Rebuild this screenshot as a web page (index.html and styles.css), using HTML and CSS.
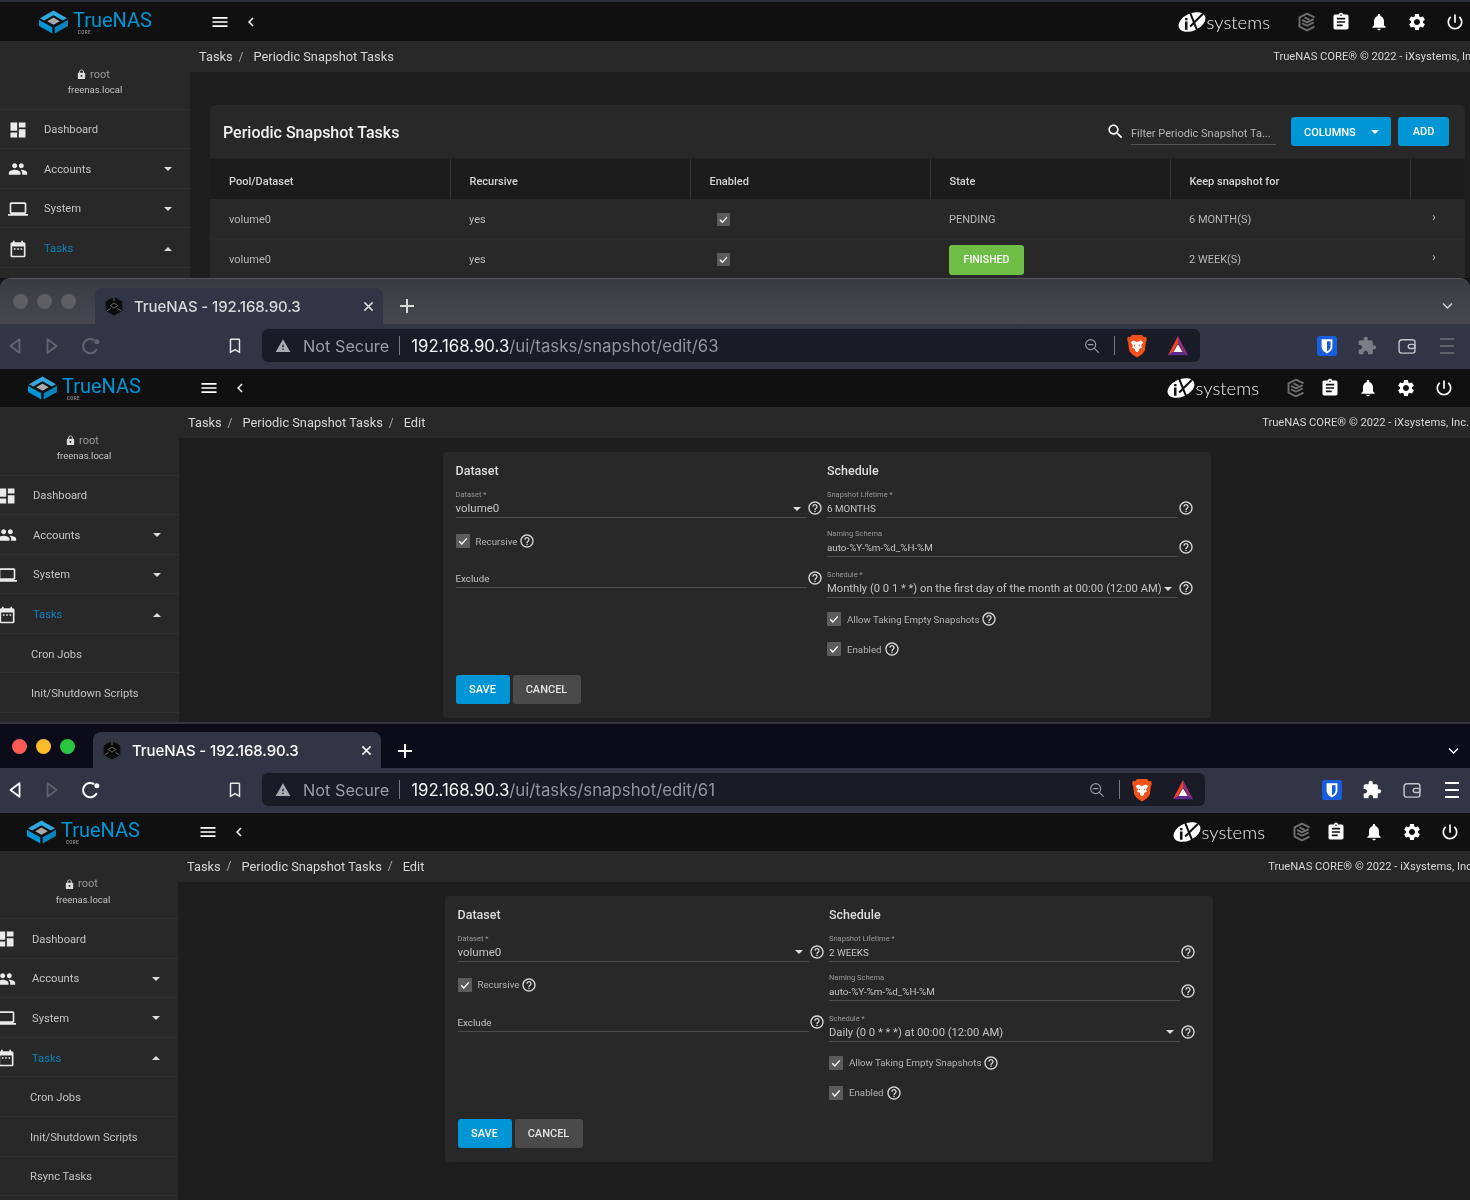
FILE: index.html
```html
<!DOCTYPE html>
<html lang="en">
<head>
<meta charset="utf-8">
<title>TrueNAS - 192.168.90.3</title>
<link rel="stylesheet" href="styles.css">
</head>
<body>
<svg class="defs" xmlns="http://www.w3.org/2000/svg">
  <symbol id="i-menu" viewBox="0 0 24 24"><path d="M3 6h18v2H3zM3 11h18v2H3zM3 16h18v2H3z"/></symbol>
  <symbol id="i-chev" viewBox="0 0 24 24"><path d="M15.41 16.58 10.83 12l4.58-4.59L14 6l-6 6 6 6z"/></symbol>
  <symbol id="i-dash" viewBox="0 0 24 24"><path d="M3 13h8V3H3v10zm0 8h8v-6H3v6zm10 0h8V11h-8v10zm0-18v6h8V3h-8z"/></symbol>
  <symbol id="i-people" viewBox="0 0 24 24"><path d="M16 11c1.66 0 2.99-1.34 2.99-3S17.66 5 16 5c-1.66 0-3 1.34-3 3s1.34 3 3 3zm-8 0c1.66 0 2.99-1.34 2.99-3S9.66 5 8 5C6.34 5 5 6.34 5 8s1.34 3 3 3zm0 2c-2.33 0-7 1.17-7 3.5V19h14v-2.5c0-2.33-4.67-3.5-7-3.5zm8 0c-.29 0-.62.02-.97.05 1.16.84 1.97 1.97 1.97 3.45V19h6v-2.5c0-2.33-4.67-3.5-7-3.5z"/></symbol>
  <symbol id="i-laptop" viewBox="0 0 24 24"><path d="M20 18c1.1 0 1.99-.9 1.99-2L22 6c0-1.1-.9-2-2-2H4c-1.1 0-2 .9-2 2v10c0 1.1.9 2 2 2H0v2h24v-2h-4zM4 6h16v10H4V6z"/></symbol>
  <symbol id="i-cal" viewBox="0 0 24 24"><path d="M19 4h-1V2h-2v2H8V2H6v2H5c-1.1 0-2 .9-2 2v14c0 1.1.9 2 2 2h14c1.1 0 2-.9 2-2V6c0-1.1-.9-2-2-2zm0 16H5V9h14v11zM7 11h2v2H7zm4 0h2v2h-2zm4 0h2v2h-2z"/></symbol>
  <symbol id="i-clip" viewBox="0 0 24 24"><path d="M19 3h-4.18C14.4 1.84 13.3 1 12 1c-1.3 0-2.4.84-2.82 2H5c-1.1 0-2 .9-2 2v14c0 1.1.9 2 2 2h14c1.1 0 2-.9 2-2V5c0-1.1-.9-2-2-2zm-7 0c.55 0 1 .45 1 1s-.45 1-1 1-1-.45-1-1 .45-1 1-1zm2 14H7v-2h7v2zm3-4H7v-2h10v2zm0-4H7V7h10v2z"/></symbol>
  <symbol id="i-bell" viewBox="0 0 24 24"><path d="M12 22c1.1 0 2-.9 2-2h-4c0 1.1.89 2 2 2zm6-6v-5c0-3.07-1.64-5.64-4.5-6.32V4c0-.83-.67-1.5-1.5-1.5s-1.5.67-1.5 1.5v.68C7.63 5.36 6 7.92 6 11v5l-2 2v1h16v-1l-2-2z"/></symbol>
  <symbol id="i-gear" viewBox="0 0 24 24"><path d="M19.14 12.94c.04-.3.06-.61.06-.94 0-.32-.02-.64-.07-.94l2.03-1.58c.18-.14.23-.41.12-.61l-1.92-3.32c-.12-.22-.37-.29-.59-.22l-2.39.96c-.5-.38-1.03-.7-1.62-.94l-.36-2.54c-.04-.24-.24-.41-.48-.41h-3.84c-.24 0-.43.17-.47.41l-.36 2.54c-.59.24-1.13.57-1.62.94l-2.39-.96c-.22-.08-.47 0-.59.22L2.74 8.87c-.12.21-.08.47.12.61l2.03 1.58c-.05.3-.09.63-.09.94s.02.64.07.94l-2.03 1.58c-.18.14-.23.41-.12.61l1.92 3.32c.12.22.37.29.59.22l2.39-.96c.5.38 1.03.7 1.62.94l.36 2.54c.05.24.24.41.48.41h3.84c.24 0 .44-.17.47-.41l.36-2.54c.59-.24 1.13-.56 1.62-.94l2.39.96c.22.08.47 0 .59-.22l1.92-3.32c.12-.22.07-.47-.12-.61l-2.01-1.58zM12 15.6c-1.98 0-3.6-1.62-3.6-3.6s1.62-3.6 3.6-3.6 3.6 1.62 3.6 3.6-1.62 3.6-3.6 3.6z"/></symbol>
  <symbol id="i-power" viewBox="0 0 24 24"><path d="M13 3h-2v10h2V3zm4.83 2.17-1.42 1.42C17.99 7.86 19 9.81 19 12c0 3.87-3.13 7-7 7s-7-3.13-7-7c0-2.19 1.01-4.14 2.58-5.42L6.17 5.17C4.23 6.82 3 9.26 3 12c0 4.97 4.03 9 9 9s9-4.03 9-9c0-2.74-1.23-5.18-3.17-6.83z"/></symbol>
  <symbol id="i-search" viewBox="0 0 24 24"><path d="M15.5 14h-.79l-.28-.27C15.41 12.59 16 11.11 16 9.5 16 5.91 13.09 3 9.5 3S3 5.91 3 9.5 5.91 16 9.5 16c1.61 0 3.09-.59 4.23-1.57l.27.28v.79l5 4.99L20.49 19l-4.99-5zm-6 0C7.01 14 5 11.99 5 9.5S7.01 5 9.5 5 14 7.01 14 9.5 11.99 14 9.5 14z"/></symbol>
  <symbol id="i-lock" viewBox="0 0 24 24"><path d="M18 8h-1V6c0-2.76-2.24-5-5-5S7 3.24 7 6v2H6c-1.1 0-2 .9-2 2v10c0 1.1.9 2 2 2h12c1.1 0 2-.9 2-2V10c0-1.1-.9-2-2-2zm-6 9c-1.1 0-2-.9-2-2s.9-2 2-2 2 .9 2 2-.9 2-2 2zm3.1-9H8.9V6c0-1.71 1.39-3.1 3.1-3.1 1.71 0 3.1 1.39 3.1 3.1v2z"/></symbol>
  <symbol id="i-help" viewBox="0 0 24 24"><path d="M11 18h2v-2h-2v2zm1-16C6.48 2 2 6.48 2 12s4.48 10 10 10 10-4.48 10-10S17.52 2 12 2zm0 18c-4.41 0-8-3.59-8-8s3.59-8 8-8 8 3.59 8 8-3.59 8-8 8zm0-14c-2.21 0-4 1.79-4 4h2c0-1.1.9-2 2-2s2 .9 2 2c0 2-3 1.75-3 5h2c0-2.25 3-2.5 3-5 0-2.21-1.79-4-4-4z"/></symbol>
  <symbol id="i-check" viewBox="0 0 14 14"><path d="M3.2 7.3 5.8 10l5-5.6" fill="none" stroke="currentColor" stroke-width="1.3"/></symbol>
  <symbol id="i-ext" viewBox="0 0 24 24"><path d="M20.5 11H19V7c0-1.1-.9-2-2-2h-4V3.5C13 2.12 11.88 1 10.5 1S8 2.12 8 3.5V5H4c-1.1 0-1.99.9-1.99 2v3.8H3.5c1.49 0 2.7 1.21 2.7 2.7s-1.21 2.7-2.7 2.7H2V20c0 1.1.9 2 2 2h3.8v-1.5c0-1.49 1.21-2.7 2.7-2.7 1.49 0 2.7 1.21 2.7 2.7V22H17c1.1 0 2-.9 2-2v-4h1.5c1.38 0 2.5-1.12 2.5-2.5S21.88 11 20.5 11z"/></symbol>
  <symbol id="i-bookmark" viewBox="0 0 24 24"><path d="M17 2H7c-1.1 0-2 .9-2 2v18l7-4 7 4V4c0-1.1-.9-2-2-2zm0 16.6-5-2.8-5 2.8V4h10v14.6z"/></symbol>
  <symbol id="i-warn" viewBox="0 0 24 24"><path d="M1 21h22L12 2 1 21zm12-3h-2v-2h2v2zm0-4h-2v-4h2v4z"/></symbol>
  <symbol id="i-back" viewBox="0 0 24 24"><path d="M18 3 6 12l12 9z" fill="none" stroke="currentColor" stroke-width="2.4" stroke-linejoin="round"/></symbol>
  <symbol id="i-fwd" viewBox="0 0 24 24"><path d="m6 3 12 9-12 9z" fill="none" stroke="currentColor" stroke-width="2.4" stroke-linejoin="round"/></symbol>
  <symbol id="i-reload" viewBox="0 0 24 24"><path d="M18.5 16.5A8.6 8.6 0 1 1 15 4.5" fill="none" stroke="currentColor" stroke-width="2.4" stroke-linecap="round"/><circle cx="19" cy="7" r="3"/></symbol>
  <symbol id="i-zoom" viewBox="0 0 24 24"><g fill="none" stroke="currentColor" stroke-width="1.7" stroke-linecap="round"><circle cx="10" cy="10" r="7.5"/><path d="M6.5 10h7M15.5 15.5l6 6"/></g></symbol>
  <symbol id="i-close" viewBox="0 0 12 12"><path d="m1.5 1.5 9 9M10.5 1.5l-9 9" fill="none" stroke="currentColor" stroke-width="1.7"/></symbol>
  <symbol id="i-plus" viewBox="0 0 16 16"><path d="M8 1v14M1 8h14" fill="none" stroke="currentColor" stroke-width="2"/></symbol>
  <symbol id="i-down" viewBox="0 0 16 16"><path d="m2.5 5.5 5.5 5.5 5.5-5.5" fill="none" stroke="currentColor" stroke-width="1.7"/></symbol>
  <symbol id="i-bars" viewBox="0 0 20 20"><path d="M3 3h14M3 10h14M3 17h14" fill="none" stroke="currentColor" stroke-width="1.8"/></symbol>
  <symbol id="i-wallet" viewBox="0 0 24 24"><g fill="none" stroke="currentColor" stroke-width="1.7"><path d="M2.5 8c0-2 1-3.500 3.500-3.500h12.500c2 0 3 1 3 2.500v11c0 1.500-1 2.500-3 2.500H5.500c-2 0-3-1-3-3z"/><rect x="13.500" y="10" width="8" height="5" rx="2.500"/></g></symbol>
  <symbol id="i-cube" viewBox="0 0 24 24"><g fill="none" stroke="currentColor" stroke-width="2.300" stroke-linejoin="round"><path d="M21 6.500 12 2 3 6.500v11L12 22l9-4.500"/><path d="m6 9.500 6 3 8-4M6 13.500l6 3 8-4M9 6.500l6 3"/></g></symbol>
  <symbol id="i-fav" viewBox="0 0 24 24"><path d="M12 1 2 6.500V18l10 5.500L22 18V6.500z"/><path d="m12 8.500 4.500 3-4.500 3-4.500-3zM12 1v5M3 18l5-3M21 18l-5-3" fill="none" stroke="#777" stroke-width="1"/></symbol>
  <symbol id="i-logo" viewBox="0 0 30 24"><path fill="#31a9e0" d="m15 .5 13.500 7.700-4.200 2.400L15 5.200 5.700 10.600 1.500 8.200z"/><path fill="#0095d5" d="m.5 9.700 4.300 2.500 9 5V23.500L.5 16z"/><path fill="#0a84bd" d="m29.500 9.700-4.300 2.500-9 5V23.500L29.500 16z"/><path fill="#a9a9a9" d="m15 7.600 6.300 3.600-6.300 3.600-6.300-3.600z"/></symbol>
  <symbol id="i-ix" viewBox="0 0 30 24"><ellipse cx="15" cy="12" rx="15.500" ry="9.500" transform="rotate(-24 15 12)" fill="#fff"/><path fill="none" stroke="#111" stroke-width="2.200" d="m13 2 8 20M27 3 13 17"/><path fill="#111" d="M7.500 7.500h2.600v2.500H7.500zM7.300 11.500h2.800v9H7.300z"/></symbol>
  <symbol id="i-brave" viewBox="0 0 24 24"><path fill="#f1511b" d="M7 1h10l2 2.200 2.200-.4.600 3.200-.9 2.500-1.200 8.500-3 3.500L12 23.500 7.300 20.500l-3-3.500L3.100 8.500 2.200 6l.6-3.200 2.200.4z"/><path fill="#fff" d="M12 8 8 6.600 5.800 8.200 8 11.500l-1 2 3 1.500v1.700l2 1.500 2-1.500V15l3-1.500-1-2 2.200-3.300L16 6.600z"/><path fill="#f1511b" d="m8.500 10.500 2 .5-1 1.500zM15.500 10.500l-2 .5 1 1.500z"/></symbol>
  <symbol id="i-bat" viewBox="0 0 24 24"><path fill="#f0402c" d="M12 1 1 22l5.500-3.200L12 9z"/><path fill="#8c2f78" d="m12 1 11 21-5.500-3.200L12 9z"/><path fill="#5a2b8c" d="M1 22h22l-5.500-3.500h-11z"/><path fill="#fff" d="m12 10 5 8.500H7z"/></symbol>
  <symbol id="i-bw" viewBox="0 0 24 24"><rect width="24" height="24" rx="3" fill="#175ddc"/><path fill="#fff" d="M5.500 4h13v9c0 4.300-3.700 6.400-6.500 8-2.800-1.600-6.500-3.700-6.500-8z"/><path fill="#175ddc" d="M12 6.200h4.300V13c0 2.700-2.300 4.300-4.300 5.500z"/></symbol>
</svg>

<main class="stack">

  <!-- Window 1: list page, only the page visible -->
  <section class="win win-list">
    <div class="app">
      <header class="topbar">
        <div class="brand"><svg class="brand-mark"><use href="#i-logo"/></svg><div class="brand-text"><span class="brand-name">TrueNAS</span><span class="brand-sub">CORE</span></div></div>
        <svg class="ico bar-menu"><use href="#i-menu"/></svg>
        <svg class="ico bar-chev"><use href="#i-chev"/></svg>
        <div class="bar-right">
          <div class="ix"><svg class="ix-mark"><use href="#i-ix"/></svg><span class="ix-name">systems</span></div>
          <span class="bar-cell bar-cube"><svg class="ico"><use href="#i-cube"/></svg></span>
          <span class="bar-cell"><svg class="ico"><use href="#i-clip"/></svg></span>
          <span class="bar-cell"><svg class="ico"><use href="#i-bell"/></svg></span>
          <span class="bar-cell"><svg class="ico"><use href="#i-gear"/></svg></span>
          <span class="bar-cell"><svg class="ico"><use href="#i-power"/></svg></span>
        </div>
      </header>
      <div class="body">
        <aside class="side">
          <div class="user"><div class="user-name"><svg class="ico lock"><use href="#i-lock"/></svg>root</div><div class="user-host">freenas.local</div></div>
          <div class="nav"><svg class="ico nav-ico"><use href="#i-dash"/></svg>Dashboard</div>
          <div class="nav"><svg class="ico nav-ico"><use href="#i-people"/></svg>Accounts<i class="caret"></i></div>
          <div class="nav"><svg class="ico nav-ico"><use href="#i-laptop"/></svg>System<i class="caret"></i></div>
          <div class="nav nav-on"><svg class="ico nav-ico"><use href="#i-cal"/></svg>Tasks<i class="caret caret-up"></i></div>
        </aside>
        <div class="main">
          <div class="crumbs"><span>Tasks</span><b>/</b><span>Periodic Snapshot Tasks</span><em>TrueNAS CORE® © 2022 - iXsystems, Inc.</em></div>
          <div class="list-wrap">
            <div class="list-card">
              <div class="list-head">
                <h1>Periodic Snapshot Tasks</h1>
                <svg class="ico filter-ico"><use href="#i-search"/></svg>
                <div class="filter">Filter Periodic Snapshot Ta...</div>
                <div class="btn btn-blue btn-cols">COLUMNS<i class="caret"></i></div>
                <div class="btn btn-blue btn-add">ADD</div>
              </div>
              <table class="tbl">
                <thead><tr><th>Pool/Dataset</th><th>Recursive</th><th>Enabled</th><th>State</th><th>Keep snapshot for</th><th></th></tr></thead>
                <tbody>
                  <tr><td>volume0</td><td>yes</td><td><span class="cb cb-tbl"><svg><use href="#i-check"/></svg></span></td><td>PENDING</td><td>6 MONTH(S)</td><td class="more">›</td></tr>
                  <tr><td>volume0</td><td>yes</td><td><span class="cb cb-tbl"><svg><use href="#i-check"/></svg></span></td><td><span class="badge">FINISHED</span></td><td>2 WEEK(S)</td><td class="more">›</td></tr>
                </tbody>
              </table>
            </div>
          </div>
        </div>
      </div>
    </div>
  </section>

  <!-- Window 2: inactive browser window -->
  <section class="win win-mid">
    <div class="strip">
      <span class="light"></span><span class="light"></span><span class="light"></span>
      <div class="tab"><svg class="fav"><use href="#i-fav"/></svg><span class="tab-title">TrueNAS - 192.168.90.3</span><svg class="tab-x"><use href="#i-close"/></svg></div>
      <svg class="tab-plus"><use href="#i-plus"/></svg>
      <svg class="tab-down"><use href="#i-down"/></svg>
    </div>
    <div class="toolbar">
      <svg class="tb tb-back"><use href="#i-back"/></svg>
      <svg class="tb tb-fwd"><use href="#i-fwd"/></svg>
      <svg class="tb tb-reload"><use href="#i-reload"/></svg>
      <svg class="tb tb-mark"><use href="#i-bookmark"/></svg>
      <div class="addr">
        <svg class="addr-warn"><use href="#i-warn"/></svg><span class="addr-ns">Not Secure</span><i class="addr-sep"></i><span class="addr-url"><span class="host">192.168.90.3</span>/ui/tasks/snapshot/edit/63</span>
        <svg class="addr-zoom"><use href="#i-zoom"/></svg><i class="addr-sep addr-sep2"></i>
        <svg class="addr-brave"><use href="#i-brave"/></svg><svg class="addr-bat"><use href="#i-bat"/></svg>
      </div>
      <span class="ext ext-first"><svg><use href="#i-bw"/></svg></span>
      <span class="ext ext-mute"><svg><use href="#i-ext"/></svg></span>
      <span class="ext ext-wallet"><svg><use href="#i-wallet"/></svg></span>
      <span class="ext ext-mute ext-dim"><svg><use href="#i-bars"/></svg></span>
    </div>
    <div class="app">
      <header class="topbar">
        <div class="brand"><svg class="brand-mark"><use href="#i-logo"/></svg><div class="brand-text"><span class="brand-name">TrueNAS</span><span class="brand-sub">CORE</span></div></div>
        <svg class="ico bar-menu"><use href="#i-menu"/></svg>
        <svg class="ico bar-chev"><use href="#i-chev"/></svg>
        <div class="bar-right">
          <div class="ix"><svg class="ix-mark"><use href="#i-ix"/></svg><span class="ix-name">systems</span></div>
          <span class="bar-cell bar-cube"><svg class="ico"><use href="#i-cube"/></svg></span>
          <span class="bar-cell"><svg class="ico"><use href="#i-clip"/></svg></span>
          <span class="bar-cell"><svg class="ico"><use href="#i-bell"/></svg></span>
          <span class="bar-cell"><svg class="ico"><use href="#i-gear"/></svg></span>
          <span class="bar-cell"><svg class="ico"><use href="#i-power"/></svg></span>
        </div>
      </header>
      <div class="body">
        <aside class="side">
          <div class="user"><div class="user-name"><svg class="ico lock"><use href="#i-lock"/></svg>root</div><div class="user-host">freenas.local</div></div>
          <div class="nav"><svg class="ico nav-ico"><use href="#i-dash"/></svg>Dashboard</div>
          <div class="nav"><svg class="ico nav-ico"><use href="#i-people"/></svg>Accounts<i class="caret"></i></div>
          <div class="nav"><svg class="ico nav-ico"><use href="#i-laptop"/></svg>System<i class="caret"></i></div>
          <div class="nav nav-on"><svg class="ico nav-ico"><use href="#i-cal"/></svg>Tasks<i class="caret caret-up"></i></div>
          <div class="nav nav-sub">Cron Jobs</div>
          <div class="nav nav-sub">Init/Shutdown Scripts</div>
        </aside>
        <div class="main">
          <div class="crumbs"><span>Tasks</span><b>/</b><span>Periodic Snapshot Tasks</span><b>/</b><span>Edit</span><em>TrueNAS CORE® © 2022 - iXsystems, Inc.</em></div>
          <div class="form-wrap">
            <form class="form-card">
              <div class="form-cols">
                <div class="col">
                  <h2>Dataset</h2>
                  <div class="field">
                    <div class="fbody"><label>Dataset *</label><div class="val val-lg">volume0<i class="caret"></i></div></div>
                    <svg class="ico help"><use href="#i-help"/></svg>
                  </div>
                  <div class="chk chk-rec"><span class="cb"><svg><use href="#i-check"/></svg></span>Recursive<svg class="ico help"><use href="#i-help"/></svg></div>
                  <div class="field field-exc">
                    <div class="fbody"><div class="val">Exclude</div></div>
                    <svg class="ico help"><use href="#i-help"/></svg>
                  </div>
                </div>
                <div class="col">
                  <h2>Schedule</h2>
                  <div class="field">
                    <div class="fbody"><label>Snapshot Lifetime *</label><div class="val">6 MONTHS</div></div>
                    <svg class="ico help"><use href="#i-help"/></svg>
                  </div>
                  <div class="field field-name">
                    <div class="fbody"><label>Naming Schema</label><div class="val">auto-%Y-%m-%d_%H-%M</div></div>
                    <svg class="ico help"><use href="#i-help"/></svg>
                  </div>
                  <div class="field field-sched">
                    <div class="fbody"><label>Schedule *</label><div class="val val-lg val-sched">Monthly (0 0 1 * *) on the first day of the month at 00:00 (12:00 AM)<i class="caret"></i></div></div>
                    <svg class="ico help"><use href="#i-help"/></svg>
                  </div>
                  <div class="chk chk-allow"><span class="cb"><svg><use href="#i-check"/></svg></span>Allow Taking Empty Snapshots<svg class="ico help"><use href="#i-help"/></svg></div>
                  <div class="chk chk-en"><span class="cb"><svg><use href="#i-check"/></svg></span>Enabled<svg class="ico help"><use href="#i-help"/></svg></div>
                </div>
              </div>
              <div class="actions"><div class="btn btn-blue btn-save">SAVE</div><div class="btn btn-grey btn-cancel">CANCEL</div></div>
            </form>
          </div>
        </div>
      </div>
    </div>
  </section>

  <!-- Window 3: active browser window -->
  <section class="win win-low">
    <div class="strip">
      <span class="light light-r"></span><span class="light light-y"></span><span class="light light-g"></span>
      <div class="tab"><svg class="fav"><use href="#i-fav"/></svg><span class="tab-title">TrueNAS - 192.168.90.3</span><svg class="tab-x"><use href="#i-close"/></svg></div>
      <svg class="tab-plus"><use href="#i-plus"/></svg>
      <svg class="tab-down"><use href="#i-down"/></svg>
    </div>
    <div class="toolbar">
      <svg class="tb tb-back"><use href="#i-back"/></svg>
      <svg class="tb tb-fwd"><use href="#i-fwd"/></svg>
      <svg class="tb tb-reload"><use href="#i-reload"/></svg>
      <svg class="tb tb-mark"><use href="#i-bookmark"/></svg>
      <div class="addr">
        <svg class="addr-warn"><use href="#i-warn"/></svg><span class="addr-ns">Not Secure</span><i class="addr-sep"></i><span class="addr-url"><span class="host">192.168.90.3</span>/ui/tasks/snapshot/edit/61</span>
        <svg class="addr-zoom"><use href="#i-zoom"/></svg><i class="addr-sep addr-sep2"></i>
        <svg class="addr-brave"><use href="#i-brave"/></svg><svg class="addr-bat"><use href="#i-bat"/></svg>
      </div>
      <span class="ext ext-first"><svg><use href="#i-bw"/></svg></span>
      <span class="ext"><svg><use href="#i-ext"/></svg></span>
      <span class="ext ext-wallet"><svg><use href="#i-wallet"/></svg></span>
      <span class="ext"><svg><use href="#i-bars"/></svg></span>
    </div>
    <div class="app">
      <header class="topbar">
        <div class="brand"><svg class="brand-mark"><use href="#i-logo"/></svg><div class="brand-text"><span class="brand-name">TrueNAS</span><span class="brand-sub">CORE</span></div></div>
        <svg class="ico bar-menu"><use href="#i-menu"/></svg>
        <svg class="ico bar-chev"><use href="#i-chev"/></svg>
        <div class="bar-right">
          <div class="ix"><svg class="ix-mark"><use href="#i-ix"/></svg><span class="ix-name">systems</span></div>
          <span class="bar-cell bar-cube"><svg class="ico"><use href="#i-cube"/></svg></span>
          <span class="bar-cell"><svg class="ico"><use href="#i-clip"/></svg></span>
          <span class="bar-cell"><svg class="ico"><use href="#i-bell"/></svg></span>
          <span class="bar-cell"><svg class="ico"><use href="#i-gear"/></svg></span>
          <span class="bar-cell"><svg class="ico"><use href="#i-power"/></svg></span>
        </div>
      </header>
      <div class="body">
        <aside class="side">
          <div class="user"><div class="user-name"><svg class="ico lock"><use href="#i-lock"/></svg>root</div><div class="user-host">freenas.local</div></div>
          <div class="nav"><svg class="ico nav-ico"><use href="#i-dash"/></svg>Dashboard</div>
          <div class="nav"><svg class="ico nav-ico"><use href="#i-people"/></svg>Accounts<i class="caret"></i></div>
          <div class="nav"><svg class="ico nav-ico"><use href="#i-laptop"/></svg>System<i class="caret"></i></div>
          <div class="nav nav-on"><svg class="ico nav-ico"><use href="#i-cal"/></svg>Tasks<i class="caret caret-up"></i></div>
          <div class="nav nav-sub">Cron Jobs</div>
          <div class="nav nav-sub">Init/Shutdown Scripts</div>
          <div class="nav nav-sub">Rsync Tasks</div>
        </aside>
        <div class="main">
          <div class="crumbs"><span>Tasks</span><b>/</b><span>Periodic Snapshot Tasks</span><b>/</b><span>Edit</span><em>TrueNAS CORE® © 2022 - iXsystems, Inc.</em></div>
          <div class="form-wrap">
            <form class="form-card">
              <div class="form-cols">
                <div class="col">
                  <h2>Dataset</h2>
                  <div class="field">
                    <div class="fbody"><label>Dataset *</label><div class="val val-lg">volume0<i class="caret"></i></div></div>
                    <svg class="ico help"><use href="#i-help"/></svg>
                  </div>
                  <div class="chk chk-rec"><span class="cb"><svg><use href="#i-check"/></svg></span>Recursive<svg class="ico help"><use href="#i-help"/></svg></div>
                  <div class="field field-exc">
                    <div class="fbody"><div class="val">Exclude</div></div>
                    <svg class="ico help"><use href="#i-help"/></svg>
                  </div>
                </div>
                <div class="col">
                  <h2>Schedule</h2>
                  <div class="field">
                    <div class="fbody"><label>Snapshot Lifetime *</label><div class="val">2 WEEKS</div></div>
                    <svg class="ico help"><use href="#i-help"/></svg>
                  </div>
                  <div class="field field-name">
                    <div class="fbody"><label>Naming Schema</label><div class="val">auto-%Y-%m-%d_%H-%M</div></div>
                    <svg class="ico help"><use href="#i-help"/></svg>
                  </div>
                  <div class="field field-sched">
                    <div class="fbody"><label>Schedule *</label><div class="val val-lg val-sched">Daily (0 0 * * *) at 00:00 (12:00 AM)<i class="caret"></i></div></div>
                    <svg class="ico help"><use href="#i-help"/></svg>
                  </div>
                  <div class="chk chk-allow"><span class="cb"><svg><use href="#i-check"/></svg></span>Allow Taking Empty Snapshots<svg class="ico help"><use href="#i-help"/></svg></div>
                  <div class="chk chk-en"><span class="cb"><svg><use href="#i-check"/></svg></span>Enabled<svg class="ico help"><use href="#i-help"/></svg></div>
                </div>
              </div>
              <div class="actions"><div class="btn btn-blue btn-save">SAVE</div><div class="btn btn-grey btn-cancel">CANCEL</div></div>
            </form>
          </div>
        </div>
      </div>
    </div>
  </section>

</main>
</body>
</html>
```

FILE: styles.css
```css
* { box-sizing: border-box; }
html, body { margin: 0; padding: 0; background: #141414; }
body { font-family: Roboto, "Liberation Sans", sans-serif; color: #ccc; }
.defs { display: none; }
.ico { fill: currentColor; display: block; flex: none; }
svg { fill: currentColor; }

.stack { width: 1470px; height: 1200px; overflow: hidden; display: flex; flex-direction: column; filter: blur(.35px); }
.win { overflow: hidden; display: flex; flex-direction: column; flex: none; --shift: -11px; --app-w: 1490px; --addr-w: 938px; --form-pad: 4px; }
.win-list { height: 278px; --shift: 0px; border-top: 2px solid #2c2e3e; }
.win-mid { height: 444px; background: #3c3d43; border-top: 1px solid #55565c; border-radius: 10px 10px 0 0; }
.win-low { height: 478px; --shift: -12px; --app-w: 1497px; --addr-w: 943px; --form-pad: 5px; border-top: 2px solid #34343a; }

/* Browser chrome */
.strip { height: 45px; display: flex; align-items: flex-start; flex: none; padding-left: 13px; color: #d8d8d8; }
.win-mid .strip { background: linear-gradient(#3b3c42, #47474f); }
.win-low .strip { height: 44px; padding-left: 12px; background: #0b0b1a; color: #fff; }
.light { width: 15px; height: 15px; border-radius: 50%; background: #5e5e63; margin: 15px 9px 0 0; flex: none; }
.light-r { background: #fb5a55; }
.light-y { background: #fdbc2e; }
.light-g { background: #2ac840; }
.tab { width: 288px; height: 36px; margin: 9px 0 0 10px; background: #323545; border-radius: 8px 8px 0 0; display: flex; align-items: center; padding: 0 9px; flex: none; }
.win-low .tab { height: 36px; margin: 8px 0 0 9px; }
.fav { width: 20px; height: 22px; color: #0c0c0c; flex: none; }
.tab-title { flex: 1; margin-left: 10px; font: 500 15px Inter, "Liberation Sans", sans-serif; letter-spacing: -.1px; }
.tab-x { width: 11px; height: 11px; flex: none; }
.tab-plus { width: 16px; height: 16px; margin: 19px 0 0 16px; flex: none; }
.tab-down { width: 13px; height: 13px; margin: 20px 16px 0 auto; flex: none; }
.win-low .tab-down { margin-right: 10px; }

.toolbar { height: 45px; background: #323545; display: flex; align-items: center; flex: none; padding-bottom: 2px; }
.win-low .toolbar { height: 44.5px; padding-bottom: 1px; }
.tb { width: 18px; height: 20px; color: #636672; flex: none; }
.tb-back { margin-left: 6px; }
.tb-fwd { margin-left: 19px; }
.tb-reload { width: 20px; margin-left: 20px; }
.tb-mark { margin-left: 125px; color: #e6e6e6; }
.win-low .tb-back, .win-low .tb-reload { color: #fff; }
.win-low .tb-fwd { color: #5d606c; }
.addr { width: var(--addr-w); height: 33px; margin-left: 18px; background: #191b26; border-radius: 6px; display: flex; align-items: center; padding: 0 10px 0 13px; font: 400 16.800px Inter, "Liberation Sans", sans-serif; flex: none; }
.addr-warn { width: 16px; height: 16px; color: #a9abb1; flex: none; }
.addr-ns { margin-left: 12px; color: #9c9ea5; font-size: 16.300px; }
.addr-sep { width: 1px; height: 19px; background: #777a82; margin: 0 11px 0 10px; flex: none; }
.addr-url { color: #93959c; }
.host { color: #f2f2f2; }
.addr-zoom { width: 16px; height: 16px; color: #9a9ca2; margin-left: auto; flex: none; }
.addr-sep2 { margin: 0 10px 0 14px; }
.addr-brave { width: 24px; height: 24px; flex: none; }
.addr-bat { width: 24px; height: 22px; margin-left: 17px; flex: none; }
.ext { width: 40px; display: flex; justify-content: center; color: #fff; flex: none; }
.ext svg { width: 20px; height: 20px; }
.ext-first { margin-left: 107px; }
.ext-mute { color: #7f818b; }
.ext-mute svg { fill: #7a7c86; }
.ext-dim { color: #5e606b; }
.ext-wallet { color: #c4c5ca; }

/* App shell */
.app { flex: 1; min-height: 0; width: var(--app-w); margin-left: var(--shift); display: flex; flex-direction: column; background: #1e1e1e; }
.topbar { height: 38px; background: #101010; display: flex; align-items: center; flex: none; color: #fff; }
.win-list .topbar { height: 39px; }
.brand { width: 204px; padding-left: 38px; display: flex; align-items: flex-start; flex: none; }
.brand-mark { width: 31px; height: 24px; flex: none; }
.brand-text { margin-left: 4px; display: flex; flex-direction: column; align-items: flex-start; height: 24px; }
.brand-name { font: 400 20px/20px Roboto, sans-serif; color: #0095d5; }
.brand-sub { font: 500 4.500px/6px Roboto, sans-serif; color: #999; letter-spacing: .4px; margin-left: 5px; }
.bar-menu { width: 20px; height: 20px; margin-left: 6px; }
.bar-chev { width: 18px; height: 18px; margin-left: 12px; }
.bar-right { margin-left: auto; display: flex; align-items: center; padding-right: 16px; }
.ix { display: flex; align-items: center; margin-right: 20px; }
.ix-mark { width: 28px; height: 22px; flex: none; }
.ix-name { font: 300 18.500px/24px Lato, sans-serif; color: #eee; margin-left: 1px; }
.bar-cell { width: 38px; display: flex; justify-content: center; flex: none; }
.bar-cell .ico { width: 20px; height: 20px; }
.bar-cube { width: 34px; color: #6f6f6f; margin-right: -2px; }

.body { flex: 1; display: flex; min-height: 0; }
.side { width: 190px; background: #282828; flex: none; overflow: hidden; }
.user { height: 68.500px; border-bottom: 1px solid #303030; padding-top: 27px; text-align: center; font-size: 9.500px; line-height: 14px; color: #c4c4c4; }
.user-name { display: flex; justify-content: center; align-items: center; font-size: 11px; color: #999; height: 13px; }
.lock { width: 11px; height: 11px; margin-right: 3px; margin-left: -4px; color: #ddd; }
.user-host { margin-top: 2px; }
.nav { height: 39.600px; display: flex; align-items: center; padding: 2px 18px 0 8px; font-size: 11.200px; color: #c4c4c4; border-bottom: 1px solid #303030; }
.nav-ico { width: 20px; height: 20px; margin-right: 16px; color: #eaeaea; }
.nav-on { color: #0e80b8; }
.nav-sub { padding-left: 42px; }
.caret { width: 0; height: 0; margin-left: auto; border: 4.500px solid transparent; border-top-color: currentColor; border-bottom: 0; color: #ddd; flex: none; display: block; }
.caret-up { border-top: 0; border-bottom: 4.500px solid #ddd; }

.main { flex: 1; min-width: 0; display: flex; flex-direction: column; }
.crumbs { height: 31px; background: #282828; display: flex; align-items: center; padding: 0 10px 0 9px; font-size: 12.800px; color: #d6d6d6; flex: none; }
.crumbs b { font-weight: 400; font-size: 12px; color: #aaa; margin: 0 10px 0 6px; }
.crumbs em { font-style: normal; font-size: 11.200px; margin-left: auto; }

/* List page */
.list-wrap { padding: 33px 25px 0 20px; }
.list-card { background: #282828; border-radius: 6px 6px 0 0; }
.list-head { height: 54px; display: flex; align-items: center; padding: 0 16px 0 13px; border-bottom: 1px solid #222; }
.list-head h1 { font: 500 16px Roboto, sans-serif; color: #f0f0f0; margin: 1px auto 0 0; }
.filter-ico { width: 19px; height: 19px; color: #fff; margin-right: 6px; }
.filter { width: 145px; height: 26px; padding-top: 8px; font-size: 11px; line-height: 14px; color: #b4b4b4; border-bottom: 1px solid #555; margin-right: 15px; white-space: nowrap; }
.btn { height: 29px; border-radius: 3px; display: flex; align-items: center; justify-content: center; font-size: 11px; font-weight: 500; color: #fff; flex: none; }
.btn-blue { background: #0095d5; }
.btn-grey { background: #4a4a4a; color: #e2e2e2; }
.btn-cols { width: 100px; justify-content: flex-start; padding: 1px 12px 0 13px; }
.btn-cols .caret { color: #fff; }
.btn-add { width: 51px; margin-left: 7px; }

.tbl { width: 100%; table-layout: fixed; border-collapse: collapse; font-size: 11px; }
.tbl th { height: 40px; background: #1c1c1c; font-weight: 500; text-align: left; padding: 4px 0 0 19px; width: 240px; color: #d4d4d4; border-right: 1px solid #333; }
.tbl th:last-child { width: auto; border: 0; }
.tbl td { height: 40px; padding: 1px 0 0 19px; color: #b8b8b8; border-bottom: 1px solid #2b2b2b; }
.tbl .more { font-size: 13px; padding: 0 0 5px 22px; color: #bbb; }
.cb { width: 14px; height: 14px; background: #5c5c5c; border-radius: 1px; color: #fff; display: block; flex: none; }
.cb svg { width: 14px; height: 14px; display: block; }
.cb-tbl { width: 13px; height: 13px; margin-left: 8px; }
.cb-tbl svg { width: 13px; height: 13px; }
.badge { display: flex; align-items: center; justify-content: center; width: 75px; height: 30px; background: #6ebd44; border-radius: 3px; color: #fff; font-size: 10.500px; font-weight: 500; }

/* Edit form */
.form-wrap { padding: 14px var(--form-pad) 0 0; flex: 1; min-height: 0; overflow: hidden; }
.form-card { width: 768px; height: 266px; margin: 0 auto; background: #282828; border-radius: 4px; display: flex; flex-direction: column; padding: 11px 0 14px 12.500px; }
.form-cols { flex: 1; display: grid; grid-template-columns: 368px 368px; column-gap: 3.500px; }
.col h2 { font: 500 12.500px/16px Roboto, sans-serif; color: #dcdcdc; margin: 0; }
.field { display: flex; align-items: flex-end; }
.col h2 + .field { margin-top: 11px; }
.field-name { margin-top: 11px; }
.field-sched { margin-top: 13px; }
.fbody { width: 351px; border-bottom: 1px solid #4c4c4c; flex: none; }
.fbody label { display: block; font-size: 7.500px; line-height: 10px; color: #999; }
.val { font-size: 9.800px; line-height: 17px; height: 17px; color: #c4c4c4; display: flex; align-items: center; white-space: nowrap; }
.val-lg { font-size: 11.500px; }
.val-sched { font-size: 11.200px; }
.val .caret { margin-right: 6px; margin-left: auto; }
.help { width: 16px; height: 16px; color: #d8d8d8; margin: 0 0 2px 0; }
.chk { height: 20px; display: flex; align-items: center; font-size: 9.700px; color: #b4b4b4; }
.chk .cb { margin-right: 6px; }
.chk .help { margin: 0 0 0 2px; }
.chk-rec { margin-top: 13px; }
.field-exc { margin-top: 19px; }
.chk-allow { margin-top: 11px; }
.chk-en { margin-top: 10px; }
.actions { display: flex; gap: 3px; }
.btn-save { width: 54px; }
.btn-cancel { width: 68px; }
```
